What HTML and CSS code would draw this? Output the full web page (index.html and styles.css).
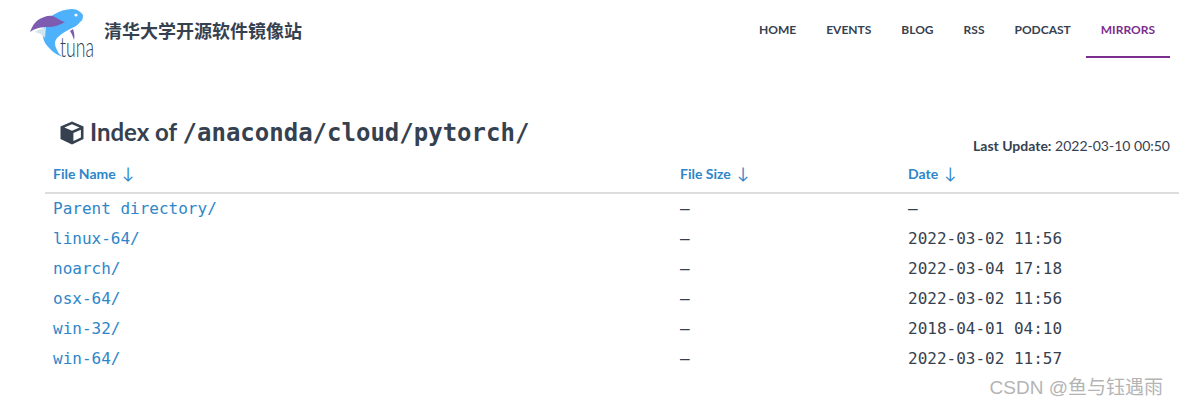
FILE: index.html
```html
<!DOCTYPE html>
<html lang="en">
<head>
    <meta charset="UTF-8">
    <meta name="viewport" content="width=device-width, initial-scale=1.0">
    <title>Index of /anaconda/cloud/pytorch/</title>
    <link rel="stylesheet" href="styles.css">
</head>
<body>
    <!-- Header -->
    <header class="site-header">
        <a class="brand" href="#">
            <svg class="brand-logo" width="66" height="54" viewBox="0 0 66 54">
                <path d="M24 6 C30 2 37 0 43 0 C48 0 52 3 54 6 C54 10 53 12 51 13 C49 16 46 18 43 19 C37 22 32 25 29 28 C27 30 26 32 26 34 C26 37 27 39 28 41 C29 44 31 46 34 48 C27 46 21 41 16 34 C14 30 13 25 14 21 C16 15 20 9 24 6 Z" fill="#4db1fb"/>
                <path d="M6 23 C9 21 13 19 17 18 L16 29 C14 26 10 24 6 23 Z" fill="#cfe6ee"/>
                <path d="M1 23 C3 17 6 13 9 11 C14 8 19 6 24 7 C28 9 32 12 36 13 C31 16 25 18 19 18 C13 18 6 19 1 23 Z" fill="#7d5bb0"/>
                <path d="M41 22 L44 20 C45 23 46 27 45 31 C44 28 43 25 41 22 Z" fill="#7d5bb0"/>
                <circle cx="47" cy="6" r="1.6" fill="#fff"/>
                <text class="brand-logo-text" x="31" y="48" textLength="34" lengthAdjust="spacingAndGlyphs">tuna</text>
            </svg>
            <span class="brand-name">清华大学开源软件镜像站</span>
        </a>
        <nav class="site-nav">
            <a href="#">HOME</a>
            <a href="#">EVENTS</a>
            <a href="#">BLOG</a>
            <a href="#">RSS</a>
            <a href="#">PODCAST</a>
            <a href="#" class="active">MIRRORS</a>
        </nav>
    </header>

    <!-- Listing -->
    <main class="listing">
        <div class="listing-top">
            <h1>
                <svg class="cube" width="24" height="24" viewBox="0 0 24 24">
                    <path d="M12 .5 23.5 5.6V18L12 23.5.5 18V5.6Z" fill="#364150"/>
                    <path d="M12 3.2 19.6 6.5 12 9.8 4.4 6.5Z" fill="#fff"/>
                    <path d="M13.4 12 20.9 8.7V16.4L13.4 20Z" fill="#fff"/>
                </svg>
                <span>Index of <code>/anaconda/cloud/pytorch/</code></span>
            </h1>
            <p class="last-update"><strong>Last Update:</strong> 2022-03-10 00:50</p>
        </div>
        <table>
            <thead>
                <tr>
                    <th class="col-name"><a href="#">File Name <span class="sort">↓</span></a></th>
                    <th class="col-size"><a href="#">File Size <span class="sort">↓</span></a></th>
                    <th><a href="#">Date <span class="sort">↓</span></a></th>
                </tr>
            </thead>
            <tbody>
                <tr><td><a href="#">Parent directory/</a></td><td>–</td><td>–</td></tr>
                <tr><td><a href="#">linux-64/</a></td><td>–</td><td>2022-03-02 11:56</td></tr>
                <tr><td><a href="#">noarch/</a></td><td>–</td><td>2022-03-04 17:18</td></tr>
                <tr><td><a href="#">osx-64/</a></td><td>–</td><td>2022-03-02 11:56</td></tr>
                <tr><td><a href="#">win-32/</a></td><td>–</td><td>2018-04-01 04:10</td></tr>
                <tr><td><a href="#">win-64/</a></td><td>–</td><td>2022-03-02 11:57</td></tr>
            </tbody>
        </table>
    </main>

    <div class="watermark">CSDN @鱼与钰遇雨</div>
</body>
</html>
```

FILE: styles.css
```css
html, body {
    height: 100%;
    overflow: hidden;
}
body {
    position: relative;
    margin: 0;
    background-color: #fff;
    color: #364150;
    font-family: Lato, "Noto Sans CJK SC", sans-serif;
}
a {
    color: inherit;
    text-decoration: none;
}

/* header */
.site-header {
    display: flex;
    justify-content: space-between;
    height: 58px;
    padding: 0 9px 0 29px;
}
.brand {
    display: flex;
    align-items: flex-start;
    padding-top: 9px;
}
.brand-logo {
    flex: none;
    overflow: visible;
}
.brand-logo-text {
    font-family: Lato, sans-serif;
    font-size: 27px;
    font-weight: 300;
    fill: #2c4259;
}
.brand-name {
    margin: 10px 0 0 9px;
    font-size: 18px;
    font-weight: 700;
    line-height: 24px;
}
.site-nav {
    display: flex;
}
.site-nav a {
    padding: 21px 15px 0;
    font-size: 12px;
    font-weight: 700;
    line-height: 18px;
    box-sizing: border-box;
    height: 58px;
}
.site-nav a.active {
    color: #7b2e8d;
    border-bottom: 2px solid #7b2e8d;
}

/* listing */
.listing {
    margin: 56px 0 0 45px;
}
.listing-top {
    display: flex;
    justify-content: space-between;
    align-items: flex-end;
    height: 38px;
    padding: 0 9px 0 15px;
}
h1 {
    display: flex;
    align-items: center;
    gap: 6px;
    margin: 0 0 2px;
    font-size: 24px;
    font-weight: 700;
    line-height: 34px;
}
code {
    font-family: "DejaVu Sans Mono", monospace;
    font-weight: 700;
}
.cube {
    flex: none;
}
.last-update {
    margin: 0 0 -4px;
    font-size: 14px;
    line-height: 20px;
}
table {
    width: 100%;
    margin-top: 2px;
    border-collapse: collapse;
    table-layout: fixed;
}
th {
    height: 37px;
    padding: 0 8px 1px;
    border-bottom: 2px solid #ddd;
    color: #2e86c9;
    font-size: 14px;
    font-weight: 700;
    text-align: left;
}
.sort {
    margin-left: 3px;
    font-weight: 400;
    font-size: 16px;
}
.col-name {
    width: 611px;
}
.col-size {
    width: 212px;
}
td {
    height: 28px;
    padding: 0 8px 2px;
    font-family: "DejaVu Sans Mono", monospace;
    font-size: 16px;
}
td a {
    color: #2e86c9;
}

.watermark {
    position: absolute;
    right: 16px;
    bottom: 6px;
    color: #b4b4b4;
    font-family: "Liberation Sans", "Noto Sans CJK SC", sans-serif;
    font-size: 19px;
    line-height: 24px;
}
```
